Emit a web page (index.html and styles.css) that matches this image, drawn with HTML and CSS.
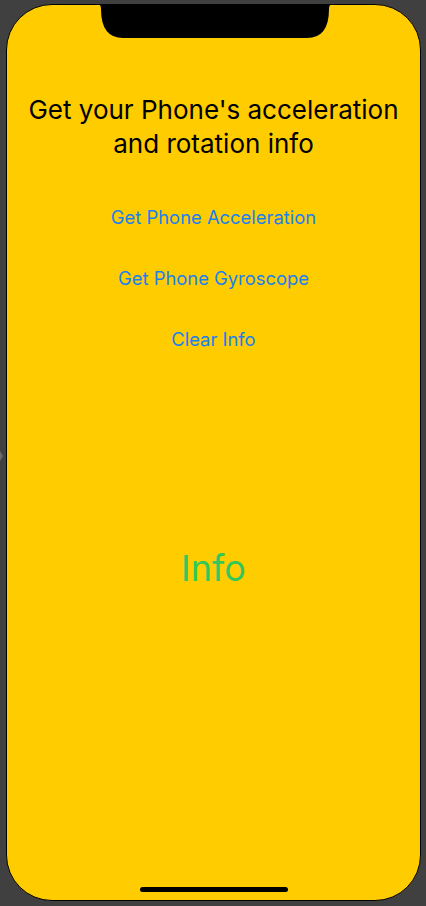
FILE: index.html
```html
<!DOCTYPE html>
<html>
<head>
<meta charset="utf-8">
<link rel="stylesheet" href="styles.css">
</head>
<body>
<div class="side-arrow"></div>
<div class="phone">
  <svg class="notch" width="236" height="36" viewBox="0 0 236 36">
    <path d="M0 0 Q4 0 4 5 Q4 34 26 34 L210 34 Q232 34 232 5 Q232 0 236 0 Z" fill="#000"/>
  </svg>
  <h1 class="title">Get your Phone's acceleration and rotation info</h1>
  <div class="actions">
    <button class="action">Get Phone Acceleration</button>
    <button class="action">Get Phone Gyroscope</button>
    <button class="action">Clear Info</button>
  </div>
  <div class="info">Info</div>
  <div class="home-indicator"></div>
</div>
</body>
</html>
```
FILE: styles.css
```css
html, body {
  margin: 0;
  padding: 0;
  background: #404040;
  width: 426px;
  height: 906px;
  overflow: hidden;
}
body {
  padding: 4px 5px 5px 6px;
  box-sizing: border-box;
  position: relative;
}
.side-arrow {
  position: absolute;
  left: 0;
  top: 451px;
  width: 0;
  height: 0;
  border-top: 5px solid transparent;
  border-bottom: 5px solid transparent;
  border-left: 3px solid #6a6a6a;
}
.phone {
  position: relative;
  width: 415px;
  height: 897px;
  box-sizing: border-box;
  background: #ffcc00;
  border: 1px solid #000;
  border-radius: 46px;
  display: flex;
  flex-direction: column;
  align-items: center;
  font-family: Inter, "Liberation Sans", sans-serif;
}
.notch {
  position: absolute;
  top: -1px;
  left: 90px;
}
.title {
  margin: 88px 0 0;
  font-size: 26px;
  font-weight: 400;
  line-height: 34px;
  text-align: center;
  color: #000;
  width: 390px;
}
.actions {
  margin-top: 45px;
  display: flex;
  flex-direction: column;
  align-items: center;
  gap: 39px;
}
.action {
  font-family: inherit;
  background: none;
  border: 0;
  padding: 0;
  font-size: 18.4px;
  line-height: 22px;
  color: #1a7ff0;
}
.info {
  margin-top: 196px;
  font-size: 36px;
  line-height: 44px;
  color: #34c759;
}
.home-indicator {
  position: absolute;
  bottom: 8px;
  left: 133px;
  width: 148px;
  height: 5px;
  border-radius: 3px;
  background: #000;
}
```
